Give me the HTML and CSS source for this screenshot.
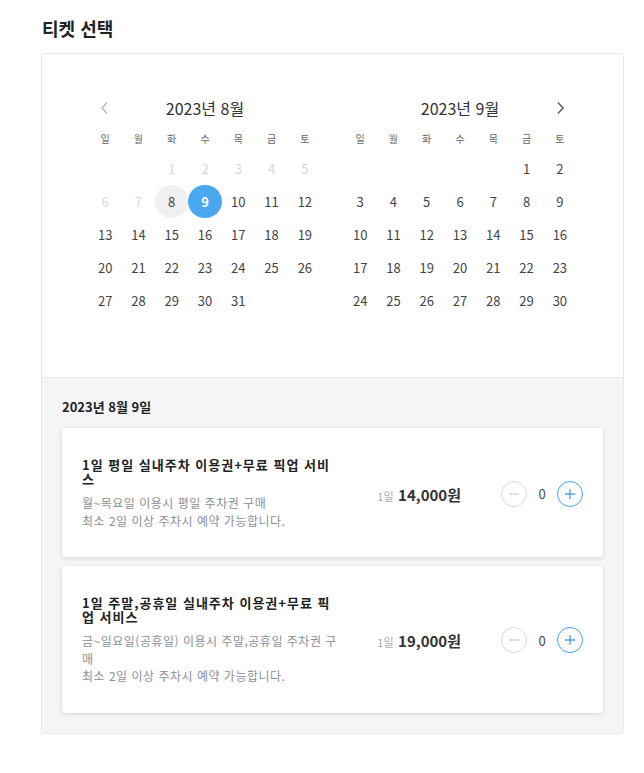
FILE: index.html
```html
<!DOCTYPE html>
<html lang="ko">
<head>
    <meta charset="UTF-8">
    <meta name="viewport" content="width=device-width, initial-scale=1.0">
    <title>티켓 선택</title>
    <link rel="stylesheet" href="styles.css">
</head>
<body>

    <div class="ticket-page">
        <h2 class="page-title">티켓 선택</h2>

        <div class="ticket-box">
            <!-- Calendar -->
            <div class="calendar">
                <div class="month">
                    <div class="month-head">
                        <button class="nav prev">
                            <svg width="10" height="14" viewBox="0 0 10 14"><path d="M7 1.5 2 7l5 5.5" fill="none" stroke="#b5b5b5" stroke-width="1.4"/></svg>
                        </button>
                        <span class="month-title">2023년 8월</span>
                        <span></span>
                    </div>
                    <div class="days week">
                        <span>일</span><span>월</span><span>화</span><span>수</span><span>목</span><span>금</span><span>토</span>
                    </div>
                    <div class="days">
                        <span></span><span></span>
                        <span class="off">1</span><span class="off">2</span><span class="off">3</span><span class="off">4</span><span class="off">5</span>
                        <span class="off">6</span><span class="off">7</span>
                        <span class="today">8</span><span class="selected">9</span>
                        <span>10</span><span>11</span><span>12</span>
                        <span>13</span><span>14</span><span>15</span><span>16</span><span>17</span><span>18</span><span>19</span>
                        <span>20</span><span>21</span><span>22</span><span>23</span><span>24</span><span>25</span><span>26</span>
                        <span>27</span><span>28</span><span>29</span><span>30</span><span>31</span>
                    </div>
                </div>

                <div class="month">
                    <div class="month-head">
                        <span></span>
                        <span class="month-title">2023년 9월</span>
                        <button class="nav next">
                            <svg width="10" height="14" viewBox="0 0 10 14"><path d="M3 1.5 8 7l-5 5.5" fill="none" stroke="#555" stroke-width="1.4"/></svg>
                        </button>
                    </div>
                    <div class="days week">
                        <span>일</span><span>월</span><span>화</span><span>수</span><span>목</span><span>금</span><span>토</span>
                    </div>
                    <div class="days">
                        <span></span><span></span><span></span><span></span><span></span>
                        <span>1</span><span>2</span>
                        <span>3</span><span>4</span><span>5</span><span>6</span><span>7</span><span>8</span><span>9</span>
                        <span>10</span><span>11</span><span>12</span><span>13</span><span>14</span><span>15</span><span>16</span>
                        <span>17</span><span>18</span><span>19</span><span>20</span><span>21</span><span>22</span><span>23</span>
                        <span>24</span><span>25</span><span>26</span><span>27</span><span>28</span><span>29</span><span>30</span>
                    </div>
                </div>
            </div>

            <!-- Tickets -->
            <div class="tickets">
                <div class="picked-date">2023년 8월 9일</div>

                <div class="ticket">
                    <div class="ticket-info">
                        <div class="ticket-name">1일 평일 실내주차 이용권+무료 픽업 서비스</div>
                        <p class="ticket-desc">월~목요일 이용시 평일 주차권 구매<br>최소 2일 이상 주차시 예약 가능합니다.</p>
                    </div>
                    <div class="price"><span class="unit">1일</span> <strong>14,000원</strong></div>
                    <div class="counter">
                        <button class="count-btn minus"><svg width="12" height="12" viewBox="0 0 12 12"><path d="M1 6h10" stroke="#d0d4d8" stroke-width="1.3"/></svg></button>
                        <span class="count">0</span>
                        <button class="count-btn plus"><svg width="12" height="12" viewBox="0 0 12 12"><path d="M1 6h10M6 1v10" stroke="#4aa3ea" stroke-width="1.3"/></svg></button>
                    </div>
                </div>

                <div class="ticket">
                    <div class="ticket-info">
                        <div class="ticket-name">1일 주말,공휴일 실내주차 이용권+무료 픽업 서비스</div>
                        <p class="ticket-desc">금~일요일(공휴일) 이용시 주말,공휴일 주차권 구매<br>최소 2일 이상 주차시 예약 가능합니다.</p>
                    </div>
                    <div class="price"><span class="unit">1일</span> <strong>19,000원</strong></div>
                    <div class="counter">
                        <button class="count-btn minus"><svg width="12" height="12" viewBox="0 0 12 12"><path d="M1 6h10" stroke="#d0d4d8" stroke-width="1.3"/></svg></button>
                        <span class="count">0</span>
                        <button class="count-btn plus"><svg width="12" height="12" viewBox="0 0 12 12"><path d="M1 6h10M6 1v10" stroke="#4aa3ea" stroke-width="1.3"/></svg></button>
                    </div>
                </div>
            </div>
        </div>
    </div>

</body>
</html>
```

FILE: styles.css
```css
* {
    box-sizing: border-box;
    margin: 0;
    padding: 0;
}

body {
    font-family: "Noto Sans CJK KR", "Noto Sans", sans-serif;
    color: #333;
    background: #fff;
}

.ticket-page {
    width: 583px;
    margin-left: 41px;
    padding-top: 15px;
}

.page-title {
    font-size: 18px;
    font-weight: 700;
    line-height: 26px;
    padding-left: 1px;
    margin-bottom: 12px;
    color: #222;
}

.ticket-box {
    border: 1px solid #e6e8ea;
    border-radius: 3px;
    overflow: hidden;
}

/* Calendar */
.calendar {
    display: flex;
    justify-content: center;
    gap: 22px;
    padding: 37px 0 60px;
    background: #fff;
    border-bottom: 1px solid #e8eaec;
}

.month {
    width: 233px;
}

.month-head {
    display: grid;
    grid-template-columns: 33px 1fr 33px;
    align-items: center;
    height: 33px;
}

.month-title {
    text-align: center;
    font-size: 16px;
    color: #333;
}

.nav {
    display: flex;
    align-items: center;
    justify-content: center;
    background: none;
    border: none;
    cursor: pointer;
}

.days {
    display: grid;
    grid-template-columns: repeat(7, 1fr);
    grid-auto-rows: 33px;
    font-size: 13px;
    color: #444;
}

.days span {
    display: flex;
    align-items: center;
    justify-content: center;
    border-radius: 50%;
}

.days.week {
    grid-auto-rows: 28px;
    font-size: 10px;
    color: #666;
}

.days .off { color: #d8d8d8; }
.days .today { background: #f0f0f0; }
.days .selected {
    background: #4aa8f0;
    color: #fff;
    font-weight: 700;
}

/* Tickets */
.tickets {
    background: #f4f5f7;
    padding: 19px 20px 20px 20px;
}

.picked-date {
    font-size: 13px;
    font-weight: 700;
    line-height: 20px;
    margin-bottom: 11px;
    color: #222;
}

.ticket {
    display: grid;
    grid-template-columns: 255px 1fr 82px;
    align-items: center;
    background: #fff;
    border-radius: 3px;
    box-shadow: 0 1px 4px rgba(0, 0, 0, 0.14);
    padding: 30px 20px 28px;
    margin-bottom: 9px;
}

.ticket:last-child { margin-bottom: 0; }

.ticket-name {
    font-size: 13px;
    font-weight: 700;
    line-height: 14px;
    letter-spacing: 1px;
    color: #222;
}

.ticket-desc {
    margin-top: 8px;
    font-size: 12px;
    line-height: 17.5px;
    letter-spacing: 0.5px;
    color: #8a8f95;
}

.price {
    text-align: right;
    padding-right: 40px;
}

.price strong {
    font-size: 15px;
    color: #333;
}

.price .unit {
    font-size: 11px;
    color: #aaa;
}

.counter {
    display: flex;
    align-items: center;
}

.count-btn {
    width: 26px;
    height: 26px;
    border-radius: 50%;
    background: #fff;
    display: flex;
    align-items: center;
    justify-content: center;
    cursor: pointer;
}

.count-btn.minus { border: 1px solid #d6dadd; }
.count-btn.plus { border: 1px solid #4aa3ea; }

.count {
    width: 30px;
    text-align: center;
    font-size: 13px;
    color: #444;
}
```
